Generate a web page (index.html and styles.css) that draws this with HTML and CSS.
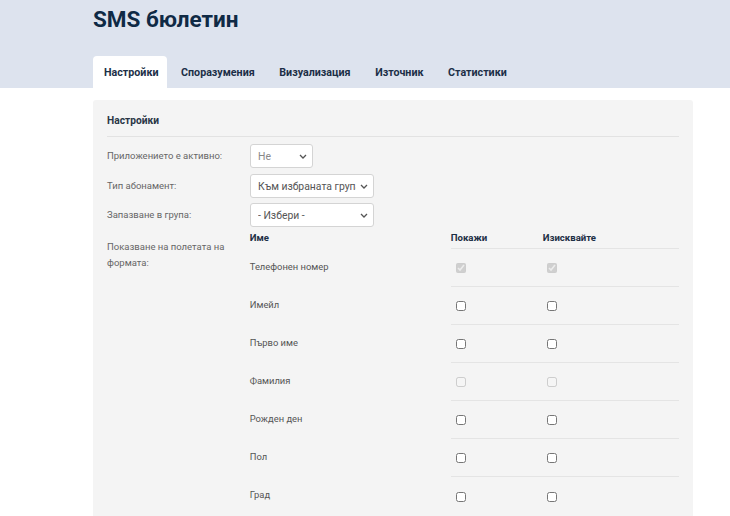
FILE: index.html
```html
<!DOCTYPE html>
<html lang="bg">
<head>
<meta charset="utf-8">
<title>SMS бюлетин</title>
<link rel="stylesheet" href="styles.css">
</head>
<body>
<header class="top">
  <h1 class="title">SMS бюлетин</h1>
  <nav class="tabs">
    <a class="tab active">Настройки</a>
    <a class="tab">Споразумения</a>
    <a class="tab">Визуализация</a>
    <a class="tab">Източник</a>
    <a class="tab">Статистики</a>
  </nav>
</header>
<main class="main">
  <section class="panel">
    <h2 class="panel-title">Настройки</h2>
    <div class="form-row">
      <label class="label">Приложението е активно:</label>
      <span class="select-wrap sw-small">
        <select class="select light"><option>Не</option></select>
        <svg class="chev" viewBox="0 0 8 5" width="8" height="5"><path d="M1 1l3 3 3-3" fill="none" stroke="#555" stroke-width="1.3"/></svg>
      </span>
    </div>
    <div class="form-row">
      <label class="label">Тип абонамент:</label>
      <span class="select-wrap sw-wide">
        <select class="select"><option>Към избраната група</option></select>
        <svg class="chev" viewBox="0 0 8 5" width="8" height="5"><path d="M1 1l3 3 3-3" fill="none" stroke="#555" stroke-width="1.3"/></svg>
      </span>
    </div>
    <div class="form-row row-tight">
      <label class="label">Запазване в група:</label>
      <span class="select-wrap sw-wide">
        <select class="select"><option>- Избери -</option></select>
        <svg class="chev" viewBox="0 0 8 5" width="8" height="5"><path d="M1 1l3 3 3-3" fill="none" stroke="#555" stroke-width="1.3"/></svg>
      </span>
    </div>
    <div class="form-row fields-row">
      <label class="label label-multi">Показване на полетата на формата:</label>
      <table class="fields">
        <thead>
          <tr><th class="c-name">Име</th><th class="c-show">Покажи</th><th class="c-req">Изисквайте</th></tr>
        </thead>
        <tbody>
          <tr><td class="c-name">Телефонен номер</td><td class="c-show"><input type="checkbox" checked disabled></td><td class="c-req"><input type="checkbox" checked disabled></td></tr>
          <tr><td class="c-name">Имейл</td><td class="c-show"><input type="checkbox"></td><td class="c-req"><input type="checkbox"></td></tr>
          <tr><td class="c-name">Първо име</td><td class="c-show"><input type="checkbox"></td><td class="c-req"><input type="checkbox"></td></tr>
          <tr><td class="c-name">Фамилия</td><td class="c-show"><input type="checkbox" disabled></td><td class="c-req"><input type="checkbox" disabled></td></tr>
          <tr><td class="c-name">Рожден ден</td><td class="c-show"><input type="checkbox"></td><td class="c-req"><input type="checkbox"></td></tr>
          <tr><td class="c-name">Пол</td><td class="c-show"><input type="checkbox"></td><td class="c-req"><input type="checkbox"></td></tr>
          <tr><td class="c-name">Град</td><td class="c-show"><input type="checkbox"></td><td class="c-req"><input type="checkbox"></td></tr>
        </tbody>
      </table>
    </div>
  </section>
</main>
</body>
</html>
```
FILE: styles.css
```css
* { box-sizing: border-box; }
html, body { margin: 0; padding: 0; }
body {
  background: #fff;
  font-family: Roboto, "Noto Sans", "Liberation Sans", sans-serif;
  color: #444;
  overflow: hidden;
}
.top {
  background: #dde3ee;
  height: 88px;
  padding-left: 93px;
  display: flex;
  flex-direction: column;
}
.title {
  margin: 5px 0 0 0;
  font-size: 22.5px;
  line-height: 28px;
  font-weight: 700;
  color: #0f2a45;
}
.tabs {
  display: flex;
  margin-top: auto;
  height: 32px;
}
.tab {
  display: flex;
  align-items: center;
  padding: 0 11px 0 11px;
  margin-right: 2.6px;
  font-size: 10.7px;
  font-weight: 700;
  color: #1c2f47;
  border-radius: 4px 4px 0 0;
}
.tab.active { background: #fff; padding-right: 9px; }
.main { padding: 12px 0 0 93px; }
.panel {
  width: 600px;
  background: #f4f4f4;
  border-radius: 3px;
  padding: 14px 14px 0 14px;
  height: 420px;
}
.panel-title {
  margin: 0;
  font-size: 10.2px;
  font-weight: 700;
  color: #2a3646;
  padding-bottom: 8px;
  border-bottom: 1px solid #e2e2e2;
  line-height: 14px;
}
.form-row {
  display: flex;
  align-items: center;
  margin-top: 6px;
}
.form-row:first-of-type { margin-top: 7px; }
.form-row.row-tight { margin-top: 5px; }
.label {
  width: 143px;
  font-size: 9.5px;
  color: #666;
  line-height: 16px;
}
.select-wrap {
  position: relative;
  display: inline-block;
  height: 24px;
}
.sw-small { width: 63px; }
.sw-wide { width: 124px; }
.select {
  appearance: none;
  -webkit-appearance: none;
  width: 100%;
  height: 24px;
  border: 1px solid #d4d4d4;
  border-radius: 3px;
  background: #fff;
  font-family: inherit;
  font-size: 10.4px;
  color: #555;
  padding: 0 17px 0 7px;
  white-space: nowrap;
  overflow: hidden;
}
.select.light { color: #888; }
.chev {
  position: absolute;
  right: 6px;
  top: 10px;
  pointer-events: none;
}
.fields-row {
  align-items: flex-start;
  margin-top: 5px;
}
.label-multi { padding-top: 7px; }
.fields {
  border-collapse: collapse;
  width: 430px;
  font-size: 9.4px;
}
.fields th {
  text-align: left;
  font-weight: 700;
  font-size: 9.6px;
  color: #1c2e44;
  height: 16px;
  padding: 0 0 4px 0;
  vertical-align: top;
  line-height: 12px;
}
.fields td {
  height: 38px;
  padding: 0;
  vertical-align: middle;
  color: #555;
}
.c-name { width: 201px; }
.c-show { width: 92px; }
.fields td.c-show, .fields td.c-req { border-top: 1px solid #e4e4e4; }
.fields td.c-name { padding-bottom: 2px; }
.fields td.c-show input { margin: 0 0 0 5px; }
.fields td.c-req input { margin: 0 0 0 4px; }
.fields input {
  width: 10px;
  height: 10px;
  vertical-align: middle;
}
```
